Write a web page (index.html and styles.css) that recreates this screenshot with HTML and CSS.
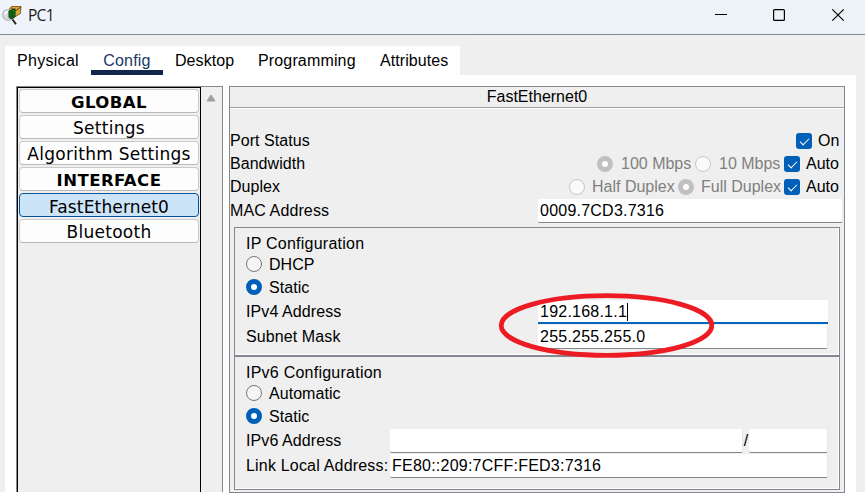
FILE: index.html
```html
<!DOCTYPE html>
<html lang="en">
<head>
<meta charset="utf-8">
<title>PC1</title>
<link rel="stylesheet" href="styles.css">
</head>
<body>
<header class="titlebar">
  <svg class="logo" width="20" height="22" viewBox="0 0 20 22">
    <path d="M6.500 5 9.500 1.500 19 1.500 18.500 8.500 11 13 7 11Z" fill="#d9a63c" stroke="#6b4a16" stroke-width=".8"/>
    <path d="M9 3 14 5.500 19 2" fill="none" stroke="#604515"/>
    <circle cx="6" cy="10" r="5.400" fill="#d5dada" stroke="#b4baba" stroke-width="1.200"/>
    <path d="M2.800 9.500Q3.500 6.800 6 6.500" fill="none" stroke="#fff" stroke-width="1.600"/>
    <path d="M7 6 13 3.800V11.500L10 14 7 12.500Z" fill="#0b8a1c" stroke="#12300f"/>
    <path d="M8 8h5M8 11h4M10 5v8" stroke="#063d0b" stroke-width=".8"/>
    <path d="M10.500 14.500 14 19.200" stroke="#202020" stroke-width="1.900"/>
  </svg>
  <span class="caption">PC1</span>
  <svg class="controls" width="132" height="16" viewBox="0 0 132 16" fill="none" stroke="#000">
    <path d="M1 7.5h12"/>
    <rect x="59.6" y="2.6" width="10.8" height="10.8" rx="1" stroke-width="1.2"/>
    <path d="M118.3 2.3 129.7 13.7M129.7 2.3 118.3 13.7" stroke-width="1.2"/>
  </svg>
</header>
<nav class="tabs">
  <span class="tab physical">Physical</span>
  <span class="tab config">Config</span>
  <span class="tab desktop">Desktop</span>
  <span class="tab programming">Programming</span>
  <span class="tab">Attributes</span>
</nav>
<main class="content">
  <aside class="sidebar">
    <div class="list">
      <div class="item head">GLOBAL</div>
      <div class="item">Settings</div>
      <div class="item">Algorithm Settings</div>
      <div class="item head">INTERFACE</div>
      <div class="item selected">FastEthernet0</div>
      <div class="item">Bluetooth</div>
    </div>
    <div class="scroll"><svg width="10" height="8" viewBox="0 0 10 8"><path d="M5 1 9 7H1Z" fill="#a0a0a0" stroke="#a0a0a0" stroke-linejoin="round"/></svg></div>
  </aside>
  <section class="panel">
    <h1>FastEthernet0</h1>
    <div class="port">
      <div class="row"><span>Port Status</span><span class="opts"><i class="check"></i><span class="on">On</span></span></div>
      <div class="row"><span>Bandwidth</span><span class="opts"><i class="radio off picked"></i><span class="dim hundred">100 Mbps</span><i class="radio off"></i><span class="dim ten">10 Mbps</span><i class="check"></i><span class="auto">Auto</span></span></div>
      <div class="row"><span>Duplex</span><span class="opts"><i class="radio off"></i><span class="dim half">Half Duplex</span><i class="radio off picked"></i><span class="dim full">Full Duplex</span><i class="check"></i><span class="auto">Auto</span></span></div>
      <div class="row mac"><span>MAC Address</span><span class="field">0009.7CD3.7316</span></div>
    </div>
    <div class="group ipv4">
      <h2>IP Configuration</h2>
      <div class="choice"><i class="radio"></i>DHCP</div>
      <div class="choice"><i class="radio picked"></i>Static</div>
      <div class="entry first"><span>IPv4 Address</span><span class="field focus">192.168.1.1<i class="caret"></i></span></div>
      <div class="entry"><span>Subnet Mask</span><span class="field">255.255.255.0</span></div>
    </div>
    <div class="group ipv6">
      <h2>IPv6 Configuration</h2>
      <div class="choice"><i class="radio"></i>Automatic</div>
      <div class="choice"><i class="radio picked"></i>Static</div>
      <div class="entry first wide"><span>IPv6 Address</span><span class="split"><span class="field"></span><span class="slash">/</span><span class="field"></span></span></div>
      <div class="entry wide"><span class="link">Link Local Address:</span><span class="field">FE80::209:7CFF:FED3:7316</span></div>
    </div>
  </section>
</main>
<svg class="highlight" width="217" height="67" viewBox="0 0 217 67"><ellipse cx="108.5" cy="33.5" rx="105.3" ry="29.8" fill="none" stroke="#ed1c24" stroke-width="4.8"/></svg>
</body>
</html>
```
FILE: styles.css
```css
* { box-sizing: border-box; }
body {
  margin: 0; width: 865px; height: 495px; overflow: hidden;
  display: flex; flex-direction: column; position: relative;
  background: linear-gradient(#efefef 492px, #fff 492px);
  font: 16px/22px "Liberation Sans", Arial, sans-serif; color: #000;
  white-space: nowrap;
}
h1, h2 { margin: 0; font: inherit; }
i { flex: none; }
.titlebar {
  height: 35px; flex: none; display: flex; align-items: flex-start;
  border-bottom: 1px solid #828790;
  background: linear-gradient(90deg, #eff3fb, #ecf4f7 35%, #ebf3f7);
}
.logo { margin: 5px 0 0 2px; }
.caption { margin: 4px 0 0 6px; font: 15.5px/22px "Open Sans", sans-serif; color: #1b1b1b; letter-spacing: -.7px; }
.controls { margin: 7px 19px 0 auto; }
.tabs {
  margin: 11px 0 0 5px; width: 455px; height: 29px; flex: none;
  background: #fff; display: flex; padding-left: 12px;
}
.tab { height: 29px; line-height: 29px; letter-spacing: .06px; }
.physical { width: 74px; letter-spacing: .3px; }
.config { width: 72px; text-align: center; color: #1b3764; border-bottom: 5px solid #10264b; letter-spacing: .2px; }
.desktop { width: 95px; padding-left: 12px; }
.programming { width: 122px; letter-spacing: .15px; }
.content {
  margin-left: 5px; width: 851px; height: 417px; flex: none;
  background: #fff; padding: 11px 11px 0 11px; display: flex; gap: 6px;
}
.sidebar {
  width: 207px; height: 406px; background: #efefef; display: flex; flex: none;
  border: 1px solid #828790; border-bottom: 0;
}
.list {
  width: 184px; border: 1px solid #000; border-bottom: 0;
  padding: 1px; display: flex; flex-direction: column; gap: 2px;
}
.item {
  height: 24px; border: 1px solid #cacaca; border-bottom-color: #b8b8b8; border-radius: 4px;
  background: #fdfdfd; text-align: center; letter-spacing: .28px;
  font: 17px/25px "DejaVu Sans", Verdana, sans-serif;
}
.head { font-weight: bold; font-size: 16.5px; letter-spacing: .45px; }
.selected { background: #cce4f7; border-color: #005499; line-height: 27px; letter-spacing: .15px; }
.scroll { padding: 7px 0 0 5px; line-height: 0; }
.panel {
  width: 616px; height: 407px; background: #efefef; flex: none;
  border: 1px solid #828790;
}
.panel h1 {
  height: 21px; line-height: 20px; text-align: center;
  border-bottom: 1px solid #a0a0a0; box-shadow: 0 1px #fff;
}
.port { padding: 21px 0 0; height: 119px; }
.row { height: 23px; display: flex; align-items: center; justify-content: space-between; letter-spacing: .05px; }
.opts { display: flex; align-items: center; padding-right: 5px; letter-spacing: 0; }
.on { width: 21px; margin-left: 6px; }
.auto { width: 33px; margin-left: 6px; }
.dim { color: #808080; margin-left: 8px; }
.hundred { width: 74px; }
.ten { width: 65px; }
.half { width: 86px; margin-left: 7px; }
.full { width: 83px; margin-left: 7px; }
.mac { height: 25px; letter-spacing: .12px; }
.mac .field { width: 305px; margin-right: 1px; }
.radio { width: 16px; height: 16px; border: 1px solid #777; border-radius: 50%; background: #f5f5f5; }
.radio.picked { border: 5px solid #005fb8; background: #fff; }
.radio.off { border-color: #c5c5c5; background: #fafafa; }
.radio.off.picked { border-color: #c0c0c0; background: #fff; }
.check { width: 16px; height: 16px; border-radius: 3px; background: #005fb8; display: grid; place-items: start center; padding-top: 3px; }
.check::after { content: ""; width: 4px; height: 8px; border: solid #fff; border-width: 0 1px 1px 0; transform: rotate(45deg); }
.field {
  display: block; height: 24px; padding-left: 2px; line-height: 24px; letter-spacing: .23px;
  background: #fff; border-bottom: 1px solid #868686; border-right: 1px solid #e5e5e5;
  border-radius: 0 0 2px 2px;
}
.group {
  margin-left: 4px; width: 606px; padding-left: 11px;
  border: 1px solid #828790; box-shadow: inset -1px -1px #fff;
}
.ipv4 { height: 129px; padding-top: 5px; }
.ipv6 { height: 134px; padding-top: 5px; }
.group h2 { height: 19px; line-height: 21px; letter-spacing: .24px; }
.choice { height: 23px; display: flex; align-items: flex-start; gap: 7px; line-height: 26px; letter-spacing: .05px; }
.choice .radio { margin-top: 4px; }
.entry { height: 25px; display: grid; grid-template-columns: 292px 290px; align-items: center; letter-spacing: .1px; }
.entry.wide { grid-template-columns: 144px 438px; }
.first { margin-top: 1px; }
.entry .link { letter-spacing: .19px; }
.split { display: grid; grid-template-columns: 353px 6px 79px; }
.slash { text-align: center; line-height: 24px; }
.focus { border-bottom: 2px solid #0067c0; border-right: 0; border-radius: 0; display: flex; align-items: center; line-height: 22px; padding-top: 2px; }
.caret { width: 1px; height: 18px; background: #000; }
.highlight { position: absolute; left: 498px; top: 292px; }
```
